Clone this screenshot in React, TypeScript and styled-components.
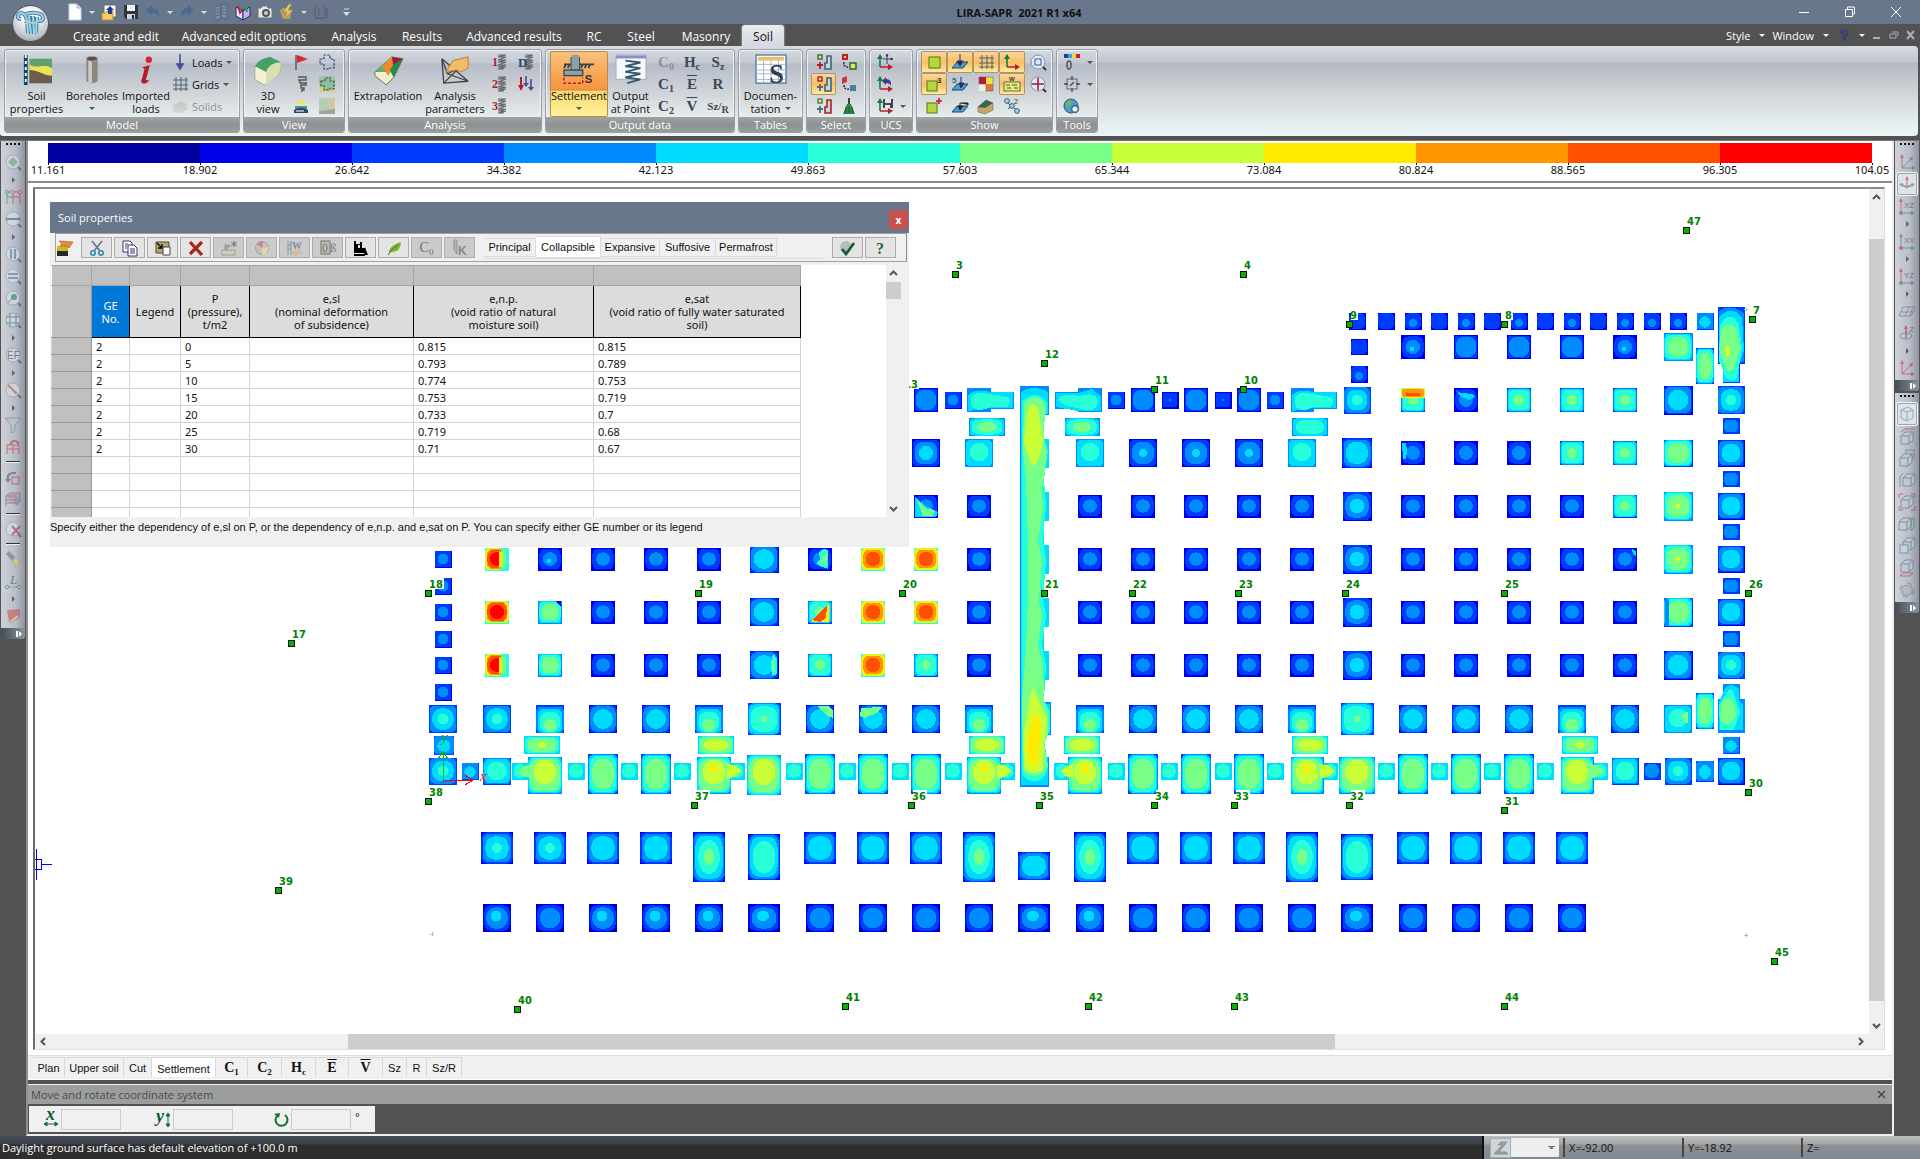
import React, { ReactNode } from "react";
import styled, { createGlobalStyle, css } from "styled-components";

const UI = `"Open Sans", "Noto Sans", sans-serif`;
const SANS = `"Liberation Sans", Arial, sans-serif`;
const DATA = `"Noto Sans", "Open Sans", sans-serif`;
const SERIF = `"Liberation Serif", "Times New Roman", serif`;

const GlobalStyle = createGlobalStyle`
  * { box-sizing: border-box; }
  body { margin: 0; background: #525252; font-family: ${UI}; font-size: 11px; color: #111; }
  button, input, select { font: inherit; color: inherit; }
  button { border: 0; background: none; padding: 0; cursor: pointer; }
  svg { display: block; flex: none; }
`;

/* ---------- icons ---------- */

const NAVY = "#2b5068";
const RED = "#c01828";
const GREEN = "#0f8040";

const Axes = () => (
  <>
    <path d="M3 0L0 5h6z" fill={GREEN} />
    <path d="M3 4v9" stroke={GREEN} strokeWidth="1.6" />
    <path d="M3 13h9" stroke={RED} strokeWidth="1.6" />
    <path d="M16 13l-5-3v6z" fill={RED} />
  </>
);
const Lens = ({ children }: { children?: ReactNode }) => (
  <>
    <path d="M12 12l4 4" stroke="#333" strokeWidth="2" />
    <circle cx="8" cy="8" r="7" fill="#dfe8f4" stroke="#7f93ad" />
    {children}
  </>
);
const Cube = ({ x = 2, y = 2 }: { x?: number; y?: number }) => (
  <g transform={`translate(${x} ${y})`}>
    <path d="M0 4l4-4h8v8l-4 4H0z" fill="#c3cfdd" stroke="#4b5a70" />
    <path d="M0 4h8v8M8 4l4-4" fill="none" stroke="#4b5a70" />
  </g>
);
const Spring = ({ x = 6 }: { x?: number }) => (
  <path d={`M${x} 1h8l-8 2h8l-8 3h8l-8 2h8l-8 3h8l-8 2h8l-8 2h6`} fill="none" stroke="#666" strokeWidth="1.2" />
);
const Plan = ({ letter }: { letter: string }) => (
  <>
    <path d="M2 15V3" stroke={letter === "XY" ? "#4b4bb0" : RED} />
    <path d="M2 15h12" stroke={letter === "YZ" ? "#4b4bb0" : GREEN} />
    <path d="M2 0L0 4h4z" fill={letter === "XY" ? "#4b4bb0" : RED} />
    <path d="M16 15l-4-2v4z" fill={letter === "YZ" ? "#4b4bb0" : GREEN} />
    <circle cx="2" cy="15" r="2" fill={letter === "XZ" ? "#4b4bb0" : letter === "XY" ? RED : GREEN} />
    <text x="5" y="10" fontSize="8" fill="#333" fontFamily="Liberation Sans">{letter}</text>
  </>
);
const Blocks = ({ a, b, plus, big }: { a: string; b: string; plus: string; big: string }) => (
  <>
    <rect x="2" y="1" width="4" height="4" fill={a} stroke={b} strokeWidth="1.4" />
    <path d="M4 8v7M1 11h6" stroke={plus} strokeWidth="1.8" />
    <path d="M11 2h4v13H9V9h2z" fill="#c9d6df" stroke={big} strokeWidth="1.6" />
  </>
);

const icons: Record<string, ReactNode> = {
  newFile: <><path d="M2 0h8l4 4v12H2z" fill="#fff" stroke="#ccd2da" /><path d="M10 0v4h4" fill="#dde" stroke="#aab" /></>,
  open: <><rect x="3" y="1" width="12" height="12" fill="#fff" stroke="#667" /><path d="M1 9h4l1-2h6v9H1z" fill="#f4cd6b" stroke="#c08f28" /><path d="M9 2l4 4h-2v4H7V6H5z" fill="#233a8c" /></>,
  save: <><path d="M1 1h14v14H3l-2-2z" fill="#30343a" /><rect x="4" y="1" width="8" height="6" fill="#eef1f4" /><rect x="4" y="10" width="8" height="5" fill="#cfd5da" /><rect x="9" y="11" width="2" height="4" fill="#222" /></>,
  undo: <path d="M1 6l6-5v3q8 0 7 10q-2-5-7-5v3z" fill="#50698f" />,
  redo: <path d="M15 6L9 1v3q-8 0-7 10q2-5 7-5v3z" fill="#50698f" />,
  pages: <><path d="M2 3l6-2v13l-6 2zM8 1h6v13H8z" fill="#8ba2ba" stroke="#47617d" /><path d="M3 6l5-2h5M3 9l5-2h5M3 12l5-2h5" stroke="#47617d" fill="none" /></>,
  book: <><path d="M1 3l7 4v9l-7-4z" fill="#e6e2f6" stroke="#2e2473" /><path d="M15 3L8 7v9l7-4z" fill="#c0b4ec" stroke="#2e2473" /><path d="M3 2l2 7 3-4" fill="none" stroke={RED} strokeWidth="1.5" /><path d="M11 2l1 6" stroke="#18a848" strokeWidth="2" /></>,
  camera: <><path d="M1 4h3l1-2h5l1 2h4v10H1z" fill="#e6e8ea" stroke="#6b7076" /><circle cx="9" cy="9" r="4" fill="#4f555c" /><circle cx="9" cy="9" r="2" fill="#c9ced3" /></>,
  bolt: <><path d="M1 7q3-6 12-1l-2 9H4z" fill="#b69d63" /><path d="M10 0L4 8h4l-3 8 9-10H9l4-6z" fill="#e4c862" stroke="#8e7d45" strokeWidth=".6" /></>,
  beamIcon: <path d="M2 14V2M6 11V4M2 14h11l3-3M12 12V2M14 11V4" stroke="#5b5577" strokeWidth="1.8" fill="none" />,
  help: <text x="4" y="13" fontSize="14" fontWeight="700" fill="#3e5aa8" stroke="#1c2c55" strokeWidth=".6" fontFamily="Liberation Sans">?</text>,

  soil: <><path d="M2 0v16" stroke="#0f4561" strokeWidth="2" /><path d="M2 0v16" stroke="#fff" strokeWidth="1" strokeDasharray="1.6 1.6" /><rect x="4" y="2" width="12" height="13" fill="#5fa070" /><path d="M4 5c4 3 8-1 12 2v4H4z" fill="#ece254" /><path d="M4 8c5 0 7 3 12 3v4H4z" fill="#6d5b50" /></>,
  borehole: <><path d="M5 2v12q3 2 6 0V2z" fill="#8d8683" /><path d="M6 2v13h2V2z" fill="#cfc9c6" /><ellipse cx="8" cy="2" rx="3" ry="1.3" fill="#57504e" stroke="#aaa" strokeWidth=".5" /></>,
  import: <><circle cx="9.500" cy="2.500" r="1.700" fill="#e0202c" /><path d="M6 6.500L10 5.500 8 13q0 1 2 0-2 3-4 2-1-.5 0-3l1.200-4.500z" fill="#b51c28" /></>,
  loads: <path d="M8 0v11M5 10h6l-3 5z" stroke="#3f4e9b" fill="#3f4e9b" strokeWidth="1.6" />,
  grid: <path d="M4 1v14M9 1v14M14 1v14M1 4h15M1 9h15M1 13h15" stroke="#4a6377" strokeWidth="1" />,
  solids: <><path d="M1 8l7-5 7 3v6l-8 3-6-1z" fill="#b5beb7" /><path d="M1 8l7-5 7 3-7 4z" fill="#9cb3a2" /><path d="M8 10l7-4v6l-7 3z" fill="#c9b2a6" /></>,
  view3d: <><path d="M1 6l8-5 6 3-1 6-8 6-5-3z" fill="#f4f1d4" stroke="#9a9c86" strokeWidth=".4" /><path d="M1 6q2-4 8-5l6 3q-6 0-8 5z" fill="#47a065" /><path d="M7 9q2-5 8-5l-1 6-7 6z" fill="#dbe0b0" /></>,
  flag: <><path d="M3 1v15" stroke="#555" strokeWidth="1.4" /><path d="M4 1l11 4-11 4z" fill="#dc2733" /></>,
  pile: <path d="M5 1h8v3H7v3h6v2H8v3h3v2H9v2M5 4h3M11 7h3" stroke="#555" fill="none" strokeWidth="1.4" />,
  layers: <><path d="M3 6l5-5 5 5z" fill="#f2e359" /><path d="M2 8h12v4H2z" fill="#4aa070" /><path d="M1 12q7-5 14 0v3H1z" fill="#32466e" /><path d="M3 13h8" stroke="#fff" /></>,
  contour: <path d="M1 5h4V1h6v4h4v9H9v1H5v-5H1z" fill="none" stroke={NAVY} strokeWidth="1.2" strokeDasharray="2.5 1.2" />,
  contourFill: <><rect width="16" height="16" fill="#9fc49f" /><path d="M0 9l6 3 10-4v8H0z" fill="#d9d27b" /><path d="M2 5h4V2h5v3h4v8H9v1H5v-4H2z" fill="#8fbf9b" stroke={NAVY} strokeWidth="1.2" strokeDasharray="2.5 1.2" /></>,
  faded: <><rect width="16" height="16" fill="#b4cdb4" /><path d="M8 0h8v16q-8-4-8-16z" fill="#cfcaa0" /><path d="M0 13l16-2v5H0z" fill="#a9a29a" /></>,
  extrap: <><path d="M1 9l9-8 6 1-5 10-4 4-6-5z" fill="#f2edca" stroke="#6b6b55" strokeWidth=".5" /><path d="M1 9l6-5 2 5z" fill="#63ad66" /><path d="M5 6l5-5 1 6-3 4z" fill="#f08a2c" /><path d="M10 1l6 1-5 5z" fill="#9c1e2c" /><path d="M16 2l-5 10-2-4 2-3z" fill="#248c4c" /></>,
  params: <><path d="M1 2l1 13 13-1L4 10zM1 2l14 12M4 10l6-3M2 15l9-9" stroke="#444" fill="none" strokeWidth=".7" /><path d="M3 9l4-6 8-2v6l-4 2-2-1z" fill="#f2bd68" stroke="#b67e30" strokeWidth=".5" /></>,
  k1: <><Spring /><text x="0" y="12" fontSize="12" fontWeight="700" fill="#b01c3c" fontFamily="Liberation Serif">1</text></>,
  k2: <><Spring /><text x="0" y="12" fontSize="12" fontWeight="700" fill="#b01c3c" fontFamily="Liberation Serif">2</text></>,
  k3: <><Spring /><text x="0" y="12" fontSize="12" fontWeight="700" fill="#b01c3c" fontFamily="Liberation Serif">3</text></>,
  kD: <><Spring x={7} /><text x="0" y="13" fontSize="13" fontWeight="700" fill="#25466b" fontFamily="Liberation Serif">D</text></>,
  arrows: <><path d="M3 1v10" stroke={RED} strokeWidth="2" /><path d="M10 11h6l-3 4zM5 7h6l-3 4z" fill="#484d8c" /><path d="M0 9h6l-3 6z" fill={RED} /><path d="M8 0v8M13 3v9" stroke="#484d8c" strokeWidth="1.6" /></>,
  settle: <><path d="M4 1v7M8 1v7M0 5h4M8 5h8M1 5l-1 2M3 5L2 7M10 5L9 7M12 5l-1 2M14 5l-1 2" stroke="#2d4654" fill="none" /><rect x="4" y="0" width="4" height="8" fill="#8ca0a8" /><rect x="0" y="8" width="10" height="3" fill="#8ca0a8" stroke="#2d4654" strokeWidth=".7" /><path d="M0 12v3h10v-3" fill="none" stroke={RED} strokeWidth=".8" strokeDasharray="1.6 1" /><text x="11" y="15" fontSize="6" fontWeight="700" fill="#333" fontFamily="Liberation Sans">S</text></>,
  outPoint: <><rect x="0" y="0" width="16" height="13" fill="#f6f8fb" stroke="#aab0d0" strokeWidth=".6" /><path d="M0 1h16" stroke="#8c90c4" strokeWidth="1.6" /><path d="M5 3l8 1-8 2 8 1-8 2 8 1-8 2 8 1-7 2" fill="none" stroke="#37596c" strokeWidth="1" /></>,
  doc: <><rect x="0" y="0" width="16" height="15" fill="#fff" stroke="#4679a0" strokeWidth=".7" /><rect x="1" y="1" width="14" height="2" fill="#edbd6c" /><path d="M0 5h16M0 8h16M0 10h16M0 13h16M4 3v12M8 3v12M12 3v12" stroke="#9fb6c6" strokeWidth=".5" /><text x="7" y="15" fontSize="14" fontWeight="700" fill="#333c58" fontFamily="Liberation Serif">S</text></>,

  sel1: <Blocks a="#d7e98a" b="#3b6b3b" plus={RED} big="#3f6378" />,
  sel2: <><rect x="1" y="0" width="6" height="6" fill="#b22" /><rect x="9" y="9" width="6" height="6" fill="#dbe56c" stroke="#286830" strokeWidth="1.5" /><path d="M3 8q-1 5 4 5" stroke="#333" strokeWidth="1.5" fill="none" strokeDasharray="2 1" /><rect x="3" y="2" width="2" height="2" fill="#f5df88" /></>,
  sel3: <Blocks a="#f0c9a0" b="#b01f1f" plus="#4f6b80" big="#3f6378" />,
  sel4: <><path d="M1 2l5-2v6L1 8z" fill="#cc3440" /><path d="M9 9h6v6H9z" fill="#447fa8" /><path d="M3 9q0 5 5 4" stroke="#333" strokeWidth="1.5" fill="none" strokeDasharray="2 1" /></>,
  sel5: <Blocks a="#d7e98a" b="#4b7b4b" plus="#4f6b80" big="#b01f1f" />,
  brush: <><path d="M8 0v7" stroke="#4d3a28" strokeWidth="2" /><path d="M6 6h4l4 10H2z" fill="#2c8446" /><path d="M5 9l-1 6M8 9v6M11 9l1 6" stroke="#175c2c" /></>,
  ucs1: <><Axes /><path d="M10 1v9M6 5h9M10 0l-1 2h2zM16 5l-2-1v2z" stroke="#3b446c" /></>,
  ucs2: <><Axes /><path d="M5 5l4-4v2q6 0 5 7q-1-3-5-3v2z" fill="#3c3c88" /></>,
  ucs3: <><Axes /><path d="M6 1h10v9H6z" fill="#40464c" /><path d="M8 1h6v4H8zM8 7h5v3H8z" fill="#e2e6ea" /></>,
  sq: <rect x="3" y="3" width="11" height="11" fill="#b7d53c" stroke="#4d7a1a" />,
  sq3: <><rect x="1" y="5" width="10" height="10" fill="#b7d53c" stroke="#4d7a1a" /><text x="11" y="7" fontSize="8" fontWeight="700" fill="#333" fontFamily="Liberation Sans">3</text></>,
  sqPlus: <><rect x="1" y="5" width="10" height="10" fill="#b7d53c" stroke="#4d7a1a" /><path d="M13 0v6M10 3h6" stroke={RED} strokeWidth="1.6" /></>,
  plate: <><path d="M0 14l5-6h11l-5 6z" fill="#4f9ccf" stroke="#1c4a6e" /><path d="M8 0v8M5 7h6l-3 5z" fill="#262e68" stroke="#262e68" /></>,
  plate5: <><path d="M0 14l5-6h11l-5 6z" fill="#4f9ccf" stroke="#1c4a6e" /><path d="M9 1v7M7 7h5l-3 5z" fill="#262e68" stroke="#262e68" /><text x="0" y="7" fontSize="8" fontWeight="700" fill="#24803c" fontFamily="Liberation Sans">5</text></>,
  plate0: <><path d="M0 14l5-6h11l-5 6z" fill="#4f9ccf" stroke="#1c4a6e" /><path d="M8 5h8v2M8 5v4M6 8h5l-3 4z" fill="#222" stroke="#222" /></>,
  axes: <Axes />,
  zoomW: <Lens><rect x="5" y="5" width="6" height="6" fill="none" stroke="#355f8d" /></Lens>,
  tiles: <><rect x="1" y="1" width="7" height="7" fill="#b81838" /><rect x="8" y="1" width="7" height="7" fill="#f5e23c" /><rect x="8" y="8" width="7" height="7" fill="#dc7c3c" /><rect x="1" y="8" width="7" height="7" fill="#f4ece0" /><path d="M1 1h14v14H8V8H1z" fill="none" stroke="#555" strokeWidth=".5" /></>,
  water: <><rect x="0" y="6" width="16" height="9" fill="#ece963" stroke="#55715c" /><path d="M2 9h4M8 9h5M3 12h4M10 12h4" stroke="#255f90" /><text x="5" y="5" fontSize="6" fontWeight="700" fill="#333" fontFamily="Liberation Sans">W</text></>,
  zoomP: <Lens><path d="M8 2v12M2 8h12" stroke="#a01c3c" strokeWidth="1.6" /></Lens>,
  house: <><path d="M0 9l8-7 7 3v7l-8 4-7-2z" fill="#caa46c" stroke="#57543f" strokeWidth=".5" /><path d="M0 9l8-7 7 3-8 5z" fill="#34684b" /></>,
  nodes: <><path d="M3 4l5 5M10 10l4 3M4 11l5-5" stroke="#555" /><circle cx="3" cy="3" r="2.4" fill="#9fd0e4" stroke="#35607e" /><circle cx="8" cy="8" r="2.4" fill="#9fd0e4" stroke="#35607e" /><circle cx="13" cy="13" r="2.4" fill="#9fd0e4" stroke="#35607e" /><text x="10" y="6" fontSize="7" fill="#333" fontFamily="Liberation Sans">2</text></>,
  scale: <><path d="M0 2h4" stroke="#223c9c" strokeWidth="4" /><path d="M4 2h4" stroke="#36a5d8" strokeWidth="4" /><path d="M8 2h4" stroke="#edd83c" strokeWidth="4" /><path d="M12 2h4" stroke="#cc2030" strokeWidth="4" /><ellipse cx="5" cy="11" rx="2" ry="4" fill="none" stroke="#555" strokeWidth="1.6" /></>,
  target: <><rect x="3" y="3" width="10" height="10" fill="none" stroke="#566" /><path d="M8 0v4M8 12v4M0 8h4M12 8h4M6 10l4-4" stroke="#334a60" strokeWidth="1.3" /></>,
  globe: <><circle cx="7" cy="8" r="7" fill="#4a9fc9" stroke="#25577a" /><path d="M2 5q4-4 6-2l-2 4-3 2z" fill="#7fb84f" /><circle cx="11" cy="11" r="3.4" fill="#e6edf2" stroke="#446f94" strokeWidth="1.6" /></>,

  hand: <><path d="M0 6h11v10H0z" fill="#c8b830" /><path d="M0 11h11v5H0z" fill="#26282a" /><path d="M2 1l14 1-4 6-3-2-6 0 2-2z" fill="#e98e3c" stroke="#a3521e" strokeWidth=".6" /></>,
  cut: <><path d="M3 1l8 10M13 1L5 11" stroke="#667380" strokeWidth="1.6" /><circle cx="4" cy="13" r="2.2" fill="none" stroke="#2d87b8" strokeWidth="1.6" /><circle cx="12" cy="13" r="2.2" fill="none" stroke="#2d87b8" strokeWidth="1.6" /></>,
  copy: <><path d="M1 1h7l2 2v9H1z" fill="#fff" stroke="#34346c" /><path d="M6 5h6l3 3v8H6z" fill="#fff" stroke="#34346c" /><path d="M8 9h5M8 11h5M8 13h5M3 4h3M3 6h2M3 8h2" stroke="#34346c" /></>,
  paste: <><path d="M1 2h13v11H1z" fill="#b0a668" stroke="#4e4a30" /><path d="M8 7h7v8H8z" fill="#fff" stroke="#444" /><path d="M2 3l5 5M7 4v4H3" stroke="#111" strokeWidth="1.4" fill="none" /></>,
  del: <path d="M2 2l12 13M14 2L2 14" stroke="#a8281c" strokeWidth="3.2" />,
  add: <><path d="M1 10h13v5H1z" fill="#d6cfae" stroke="#8b866e" /><path d="M5 10V6h4" stroke="#7d8c8c" strokeWidth="3" fill="none" /><path d="M13 1v6M10 2l6 4M16 2l-6 4" stroke="#444" /></>,
  pie: <><circle cx="8" cy="8" r="6.5" fill="#cbb8b8" stroke="#888" /><path d="M8 8l7-1-3 7-4 1z" fill="#e9dcaa" /><path d="M8 8L3 4l6-3z" fill="#c25a6a" /></>,
  wHand: <><path d="M1 1v14M4 1v14M1 5h3M1 9h3" stroke="#78909c" strokeWidth="1.4" /><text x="5" y="9" fontSize="10" fontWeight="700" fill="#5b7087" fontFamily="Liberation Serif">W</text><path d="M3 11l10-1 3 3-8 3z" fill="#d9ae8c" /></>,
  beta: <><rect x="1" y="1" width="9" height="13" fill="#bbb59f" stroke="#444" /><ellipse cx="5" cy="8" rx="2" ry="4" fill="none" stroke="#444" /><text x="10" y="12" fontSize="13" fill="#555" fontFamily="Liberation Serif">ß</text></>,
  dozer: <path d="M1 1h2v3h4V2h2v6h3v-1l1 3 2 5h-3l-1-2H1zM1 14h11v2H1zM5 5v3h2V5z" fill="#000" />,
  leaf: <><path d="M3 14q-1-8 12-12q0 10-10 10z" fill="#7fb52e" /><path d="M2 15q4-7 10-10" stroke="#4c7d18" fill="none" /></>,
  pileK: <><path d="M2 0v10l3 4V0z" fill="#aaa" stroke="#777" /><text x="6" y="15" fontSize="12" fontWeight="700" fill="#666" fontFamily="Liberation Sans">K</text></>,
  ok: <><circle cx="7" cy="7" r="6" fill="#b9bcbc" /><path d="M3 9l4 5 8-11" stroke="#155c2c" strokeWidth="2.6" fill="none" /></>,
  qm: <text x="4" y="14" fontSize="16" fontWeight="700" fill="#176a35" fontFamily="Liberation Serif">?</text>,

  lensDot: <Lens><path d="M8 3l5 5-5 5-5-5z" fill="#6ba57a" /></Lens>,
  frame: <><path d="M8 15V3h7v12M8 8h7" stroke={RED} fill="none" /><path d="M2 15V3h6M2 8h6" stroke="#1f7a4a" fill="none" /><circle cx="2" cy="3" r="1.6" fill="#a5d0b0" stroke={GREEN} /><circle cx="8" cy="3" r="1.6" fill="#fcc" stroke={RED} /><circle cx="15" cy="3" r="1.6" fill="#fcc" stroke={RED} /></>,
  lensH: <Lens><path d="M1 8h14" stroke="#2c5c50" strokeWidth="2" /><circle cx="2" cy="8" r="1.6" fill={GREEN} /><circle cx="14" cy="8" r="1.6" fill={GREEN} /></Lens>,
  lensV: <Lens><path d="M6 3v10M10 3v10" stroke="#285a78" strokeWidth="1.6" /></Lens>,
  lensE: <Lens><path d="M3 6h10M3 10h10" stroke="#285a78" strokeWidth="1.6" /></Lens>,
  lensC: <Lens><circle cx="9" cy="7" r="3" fill={GREEN} /><path d="M2 13l5-4" stroke="#555" /></Lens>,
  lensG: <Lens><path d="M5 1v14M11 1v14M1 5h14M1 11h14" stroke="#285a78" /></Lens>,
  lensEF: <Lens><text x="2" y="12" fontSize="10" fill="#333" fontFamily="Liberation Sans">EF</text></Lens>,
  lensP: <Lens><path d="M3 3l9 9" stroke="#b8602c" strokeWidth="2.4" /></Lens>,
  funnel: <path d="M0 1h16l-6 7v6l-4 2V8z" fill="#b7c5cc" stroke="#65767f" />,
  frameUndo: <><path d="M2 15V6h12v9M2 10h12M8 6v9" stroke={RED} fill="none" /><path d="M5 6q4-8 9-1" stroke={RED} strokeWidth="2" fill="none" /></>,
  rot: <><rect x="7" y="8" width="7" height="7" fill="none" stroke={RED} /><path d="M3 12q-2-9 8-8" stroke="#34407c" strokeWidth="2" fill="none" /><path d="M0 10h6l-3 4z" fill="#34407c" /></>,
  mesh: <path d="M1 5l4-3h10v9l-4 3M1 5h10v9M1 5v10M1 9h10l4-3M1 12h10l4-3" stroke="#445a78" fill="#d58080" />,
  lensX: <Lens><path d="M7 5l8 9M15 5l-8 9" stroke={RED} strokeWidth="2" /></Lens>,
  torch: <><path d="M1 3l3-3 6 6-3 4z" fill="#667" /><path d="M7 10l5-4 3 6-4 4z" fill="#e9cf3a" stroke="#a88" /></>,
  lIcon: <><text x="5" y="11" fontSize="13" fontStyle="italic" fill="#333" fontFamily="Liberation Serif">L</text><path d="M1 14h14" stroke={GREEN} strokeDasharray="2 1" /><circle cx="2" cy="14" r="1.6" fill="#cec" stroke={GREEN} /><circle cx="14" cy="14" r="1.6" fill="#cec" stroke={GREEN} /></>,
  notes: <><path d="M2 2l13-1v9L4 14z" fill="#d04040" /><path d="M4 14l8-7 2 2-8 6z" fill="#f0d060" stroke="#a77" /></>,

  iso: <><path d="M3 14l9-9" stroke="#4b4bb0" /><path d="M3 14V2" stroke={RED} /><path d="M3 14h11" stroke={GREEN} /><path d="M3 0L1 4h4z" fill={RED} /><path d="M14 3l-4 1 3 3z" fill="#4b4bb0" /><path d="M16 14l-3-2v4z" fill={GREEN} /></>,
  iso2: <><path d="M8 11V1M8 11l6-3M8 11L2 8" stroke={RED} strokeWidth="1.2" /><path d="M8 0L6 4h4z" fill={RED} /><path d="M8 12L2 9" stroke="#4b4bb0" /><path d="M0 8l4-1-1 4z" fill="#4b4bb0" /><path d="M16 8l-4-1 1 4z" fill={GREEN} /><path d="M8 12l6-3" stroke={GREEN} /></>,
  xz: <Plan letter="XZ" />, xy: <Plan letter="XY" />, yz: <Plan letter="YZ" />,
  floor: <path d="M0 13l4-9h12l-4 9zM2 9h12M6 13l4-9M10 13l4-9" fill="#c5ccd6" stroke="#56637a" />,
  rotZ: <><path d="M7 13V1" stroke={RED} strokeWidth="1.6" /><path d="M7 0L5 4h4z" fill={RED} /><ellipse cx="7" cy="11" rx="6" ry="3" fill="none" stroke="#3b538c" /><text x="10" y="7" fontSize="8" fill="#333" fontFamily="Liberation Sans">Z</text></>,
  xyz: <><path d="M3 14V2M3 14h12M3 14l9-9" stroke={RED} /><path d="M3 0L1 4h4zM16 14l-4-2v4zM14 3l-4 1 3 3z" fill={RED} /></>,
  cube: <><path d="M2 4l7-3 5 3v8l-6 3-6-3z" fill="#d8dee6" stroke="#5f6c7e" /><path d="M2 4l6 2 6-2M8 6v9" stroke="#5f6c7e" fill="none" /></>,
  cubeT: <><Cube y={4} /><path d="M2 4l4-3h9" stroke={RED} fill="none" /></>,
  cubeB: <><rect x="7" y="0" width="8" height="8" fill="none" stroke="#1f6f9c" /><Cube x={1} y={4} /></>,
  cubeL: <><Cube x={4} /><path d="M1 15V5l3-4" stroke={GREEN} fill="none" /></>,
  cubeS: <><Cube /><path d="M0 4V0h4M12 0h4v4M0 12v4h4M12 16h4v-4" stroke={RED} fill="none" /></>,
  cubeR: <><Cube x={0} /><path d="M12 15V5l3-4v10z" stroke={GREEN} fill="none" /></>,
  cubeF: <><Cube x={4} y={0} /><rect x="1" y="7" width="8" height="8" fill="#d3dfea" stroke="#1f6f9c" /></>,
  cubeD: <><Cube y={0} /><path d="M1 16l3-3h10l-3 3z" stroke={RED} fill="none" /></>,
  cubeI: <><path d="M8 3l5 2v6l-5 3-5-3V5z" fill="#a7b1be" stroke="#5f6c7e" /><circle cx="8" cy="8" r="7" fill="none" stroke={GREEN} strokeDasharray="5 6" /></>,

  moveX: <><text x="3" y="9" fontSize="18" fontWeight="700" fontStyle="italic" fill="#0f5a2c" fontFamily="Liberation Serif">x</text><path d="M3 13h10M1 13l3-2v4zM15 13l-3-2v4z" stroke="#0f7038" fill="#0f7038" /></>,
  moveY: <><text x="1" y="11" fontSize="18" fontWeight="700" fontStyle="italic" fill="#0f5a2c" fontFamily="Liberation Serif">y</text><path d="M13 5v8M13 2l-2 3h4zM13 16l-2-3h4z" stroke="#0f7038" fill="#0f7038" /></>,
  turn: <><path d="M5 4a6 6 0 1 0 7 0" fill="none" stroke="#0f7038" strokeWidth="2" /><path d="M1 3l6-1-1 5z" fill="#0f7038" /></>,
  zStat: <path d="M5 5l3-3h6l-8 10h7l2 2H1L10 4z" fill="#9c9fa2" stroke="#8c9094" />,
};

const IconSvg = styled.svg`overflow: visible;`;
const Icon = ({ name, size = 16 }: { name: string; size?: number }) => (
  <IconSvg width={size} height={size} viewBox="0 0 16 16" aria-hidden="true">{icons[name]}</IconSvg>
);

const Caret = styled.i<{ $c?: string }>`
  display: block; flex: none; width: 0; height: 0;
  border: 3px solid transparent; border-top-color: ${(p) => p.$c || "#555"}; border-bottom: 0;
`;
const CaretRight = styled.i`
  display: block; width: 0; height: 0; border: 3px solid transparent; border-left-color: #5c6166; border-right: 0;
`;

/* ---------- title bar and tabs ---------- */

const Page = styled.div`display: flex; flex-direction: column; height: 100vh; min-height: 700px; background: #525252; overflow: hidden;`;
const TitleBar = styled.header`
  position: relative; display: flex; align-items: center; flex: none; height: 24px;
  padding-left: 67px; background: #68778b;
`;
const Quick = styled.div`display: flex; align-items: center; gap: 6px; flex: 1 0 68px;`;
const QuickButton = styled.button<{ $dim?: boolean }>`opacity: ${(p) => (p.$dim ? 0.6 : 1)};`;
const QuickMore = styled.button`margin-left: 8px;`;
const AppTitle = styled.h1`margin: 0; font: 700 11px ${UI}; color: #111;`;
const WinButtons = styled.div`flex: 1 0 0; display: flex; justify-content: flex-end; gap: 32px; padding-right: 17px; color: #fff;`;
const Orb = styled.button`
  position: absolute; left: 12px; top: 5px; width: 37px; height: 37px; border-radius: 50%;
  background: radial-gradient(circle at 50% 30%, #fff 20%, #c3c8ce 65%, #888e96); border: 1px solid #555;
  display: grid; place-items: center; z-index: 2;
`;
const TabBar = styled.nav`display: flex; flex: none; align-items: flex-end; height: 22px; padding-left: 60px; background: #525252;`;
const TabButton = styled.button<{ $w: number; $on?: boolean }>`
  width: ${(p) => p.$w}px; height: 21px; padding-top: 2px; flex: none; color: #fff; font-size: 12px; white-space: nowrap;
  ${(p) => p.$on && css`background: linear-gradient(#e9ecf0, #d5d8e0); color: #111; border-radius: 3px 3px 0 0; box-shadow: 0 0 2px #bfeff5;`}
`;
const TabTools = styled.div`margin-left: auto; display: flex; align-items: center; gap: 7px; height: 22px; padding-right: 4px; color: #fff;`;
const TextButton = styled.button`display: flex; align-items: center; gap: 9px; color: #fff;`;

/* ---------- ribbon ---------- */

const Ribbon = styled.section`
  display: flex; flex: none; gap: 3px; height: 90px; padding: 3px 4px 2px; margin-right: 2px;
  border-radius: 0 4px 4px 3px; border-bottom: 1px solid #f4f6f6;
  background: linear-gradient(#d8dbe2, #c2c6d0 16px, #b3b9c5 17px, #d3d7da 50px, #e7f2f2 82px);
`;
const Group = styled.div<{ $w: number }>`
  width: ${(p) => p.$w}px; flex: none; display: flex; flex-direction: column;
  border: 1px solid #9a9fa6; border-radius: 3px; overflow: hidden; box-shadow: inset 0 0 0 1px #eef1f3;
  background: linear-gradient(#d5d9e0, #c3c8d2 13px, #b6bcc8 14px, #d5d9dc 48px, #e8f1f1 70px);
`;
const GroupBody = styled.div`display: flex; flex: 1; padding: 1px 4px 0; min-height: 0;`;
const GroupName = styled.div`height: 15px; flex: none; font-size: 11px; line-height: 16px; text-align: center; color: #fff; background: linear-gradient(#a0a4a4, #8d9191 50%, #999d9d);`;
const BigBtn = styled.button<{ $w: number; $on?: boolean }>`
  width: ${(p) => p.$w}px; flex: none; display: flex; flex-direction: column; align-items: center; padding-top: 4px;
  ${(p) => p.$on && css`border: 1px solid #b58c4c; border-radius: 2px; padding-top: 3px; background: linear-gradient(#fbc07a, #f79640 37px, #b98b4c 38px, #fbd772 39px, #fff39c);`}
`;
const BigText = styled.span`display: flex; flex-direction: column; align-items: center; margin-top: 4px; line-height: 13px; font-size: 11px; white-space: nowrap;`;
const CaretRow = styled.span`display: flex; align-items: center; justify-content: center; gap: 4px; height: 13px;`;
const SmallGrid = styled.div<{ $cols: number; $w?: number }>`
  display: grid; grid-template-columns: repeat(${(p) => p.$cols}, ${(p) => p.$w || 26}px); grid-auto-rows: 22px; align-content: start;
`;
const SmallBtn = styled.button<{ $on?: boolean; $dim?: boolean }>`
  display: flex; align-items: center; justify-content: center; gap: 4px; white-space: nowrap;
  opacity: ${(p) => (p.$dim ? 0.4 : 1)};
  ${(p) => p.$on && css`border: 1px solid #b29462; border-radius: 2px; background: linear-gradient(#fbd6a0, #f9bf62 50%, #fdeaa0);`}
`;
const RowBtn = styled(SmallBtn)`justify-content: flex-start;`;
const MathText = styled.span<{ $over?: boolean }>`
  font: 700 15px/18px ${SERIF}; color: #3d4758;
  sub { font-size: 10px; line-height: 10px; vertical-align: -3px; }
  ${(p) => p.$over && css`text-decoration: overline;`}
`;
const Ratio = styled(MathText)`font-size: 11px;`;

const Big = ({ icon, a, b, w, on, caret, size = 30 }: { icon: string; a: string; b?: string; w: number; on?: boolean; caret?: boolean; size?: number }) => (
  <BigBtn $w={w} $on={on}>
    <Icon name={icon} size={size} />
    <BigText><span>{a}</span><CaretRow>{b}{caret && <Caret />}</CaretRow></BigText>
  </BigBtn>
);
const Cells = ({ names, cols, on = [], w }: { names: string[]; cols: number; on?: string[]; w?: number }) => (
  <SmallGrid $cols={cols} $w={w}>
    {names.map((n, i) => n ? <SmallBtn key={i} $on={on.includes(n)} aria-label={n}><Icon name={n} /></SmallBtn> : <span key={i} />)}
  </SmallGrid>
);
const CaretCol = styled.div`display: grid; grid-auto-rows: 22px; align-items: center; padding-left: 4px;`;

/* ---------- rails ---------- */

const Workspace = styled.div`display: flex; flex: 1; min-height: 0; border-top: 1px solid #777; margin-top: 4px;`;
const RailBox = styled.aside<{ $w: number }>`width: ${(p) => p.$w}px; flex: none; display: flex; flex-direction: column; padding: 0 1px;`;
const Rail = styled.div`
  display: flex; flex-direction: column; align-items: center; padding: 1px 0;
  background: linear-gradient(90deg, #cfd2d8, #b9bdc8 60%, #9095a1);
`;
const Dots = styled.div`width: 14px; height: 8px; border-top: 2px dotted #111; margin-top: 1px;`;
const RailBtn = styled.button<{ $on?: boolean }>`
  width: 20px; height: 22px; display: grid; place-items: center;
  svg { opacity: 0.5; }
  ${(p) => p.$on && css`background: #dde5e8; border: 1px solid #9aa4ac; border-radius: 2px; box-shadow: 0 0 0 1px #f0f4f5;`}
`;
const RailArrow = styled.div`height: 13px; display: grid; place-items: center;`;
const RailSep = styled.div`height: 8px; display: grid; place-items: center; &::before { content: ""; width: 14px; border-top: 1px solid #333; border-bottom: 1px solid #eee; }`;
const RailEnd = styled.div`
  height: 11px; display: flex; align-items: center; justify-content: flex-end; gap: 1px; padding-right: 3px; margin-bottom: 2px;
  background: linear-gradient(90deg, #444c58, #8c93a0); border-radius: 0 0 3px 0;
  &::before { content: ""; width: 2px; height: 6px; background: #fff; }
  i { border-left-color: #fff; }
`;
const RailTools = ({ items, on }: { items: string[]; on?: string }) => (
  <>
    <Rail>
      <Dots />
      {items.map((n, i) =>
        n === ">" ? <RailArrow key={i}><CaretRight /></RailArrow>
          : n === "-" ? <RailSep key={i} />
          : <RailBtn key={i} $on={n === on} aria-label={n}><Icon name={n} /></RailBtn>)}
    </Rail>
    <RailEnd><CaretRight /></RailEnd>
  </>
);

/* ---------- centre ---------- */

const Centre = styled.main`flex: 1; min-width: 0; display: flex; flex-direction: column; border-right: 2px solid #eee; border-left: 2px solid #8f8f8f; border-bottom: 2px solid #eee;`;
const Doc = styled.section`flex: 1; min-height: 0; display: flex; flex-direction: column; background: #fff; border-bottom: 1px solid #fff; margin-bottom: 4px;`;
const Legend = styled.div`flex: none; height: 42px; padding: 2px 20px 0 20px; overflow: hidden; border-bottom: 2px solid #8b8b8b;`;
const Bar = styled.div`display: grid; grid-template-columns: repeat(12, 1fr); height: 20px;`;
const Swatch = styled.span<{ $c: string }>`background: ${(p) => p.$c};`;
const Ticks = styled.div`display: flex; justify-content: space-between;`;
const Tick = styled.span`
  width: 0; display: flex; flex-direction: column; align-items: center; font: 11px/10px ${DATA}; color: #111;
  &::before { content: ""; height: 2px; flex: none; border-left: 1px solid #111; }
`;
const View = styled.div`flex: 1; min-height: 0; display: flex; flex-direction: column; margin: 4px 7px 5px 5px; border-left: 2px solid #6c6c6c; border-top: 2px solid #8b8b8b; border-right: 1px solid #ddd; border-bottom: 1px solid #ddd;`;
const ViewTop = styled.div`flex: 1; min-height: 0; display: flex;`;
const Canvas = styled.div`flex: 1; min-width: 0; position: relative; overflow: hidden; background: #fff;`;
const VScroll = styled.div`width: 15px; flex: none; display: flex; flex-direction: column; background: #f0f0f0;`;
const HScroll = styled.div`height: 15px; flex: none; display: flex; background: #f0f0f0; padding-right: 15px;`;
const ScrollArrow = styled.button<{ $len: number; $v?: boolean }>`
  display: grid; place-items: center; flex: none; background: #f0f0f0;
  ${(p) => (p.$v ? `height: ${p.$len}px;` : `width: ${p.$len}px;`)}
`;
const Thumb = styled.div<{ $grow: number }>`flex: ${(p) => p.$grow} 1 0; background: #cdcdcd;`;
const Space = styled.div<{ $grow: number }>`flex: ${(p) => p.$grow} 1 0;`;
const Chevron = ({ turn }: { turn: number }) => (
  <svg width="9" height="9" viewBox="0 0 9 9" aria-hidden="true"><path d="M1 6l3.5-3.5L8 6" transform={`rotate(${turn} 4.5 4.5)`} fill="none" stroke="#555" strokeWidth="2" /></svg>
);
const Sheets = styled.nav`flex: none; display: flex; height: 24px; background: #f0f0f0; border-top: 1px solid #ddd; padding: 1px 2px 2px 5px; font: 12px ${SANS};`;
const Sheet = styled.button<{ $w: number; $on?: boolean }>`
  width: ${(p) => p.$w}px; flex: none; border-right: 1px solid #d8d8d8; border-top: 1px solid #d8d8d8; font-size: 11px; white-space: nowrap;
  ${(p) => p.$on && css`background: #fff; padding-top: 3px;`}
`;
const SheetMath = styled(MathText)<{ $grey?: boolean }>`color: ${(p) => (p.$grey ? "#707070" : "#111")}; font-size: 14px; font-weight: ${(p) => (p.$grey ? 400 : 700)}; sub { font-size: 9px; }`;
const DockTitle = styled.div`flex: none; height: 20px; display: flex; align-items: center; justify-content: space-between; padding: 0 6px 0 3px; border-top: 1px solid #eee; background: #9b9e9c; color: #4a4a4a; font-size: 11px;`;
const DockBody = styled.div`flex: none; height: 30px; padding: 2px 0 0 1px;`;
const DockPanel = styled.form`display: grid; grid-template-columns: 112px 118px 1fr; align-items: center; width: 346px; height: 26px; padding-left: 14px; background: #f0f0f0;`;
const Field = styled.label`display: flex; align-items: center; gap: 2px;`;
const FieldInput = styled.input`width: 60px; height: 21px; border: 1px solid #ccc; background: #f0f0f0;`;
const Degree = styled.span`align-self: flex-start; padding-left: 2px;`;

/* ---------- dialog ---------- */

const Dialog = styled.section`position: absolute; left: 15px; top: 13px; width: 859px; height: 345px; display: flex; flex-direction: column; background: #f0f0f0;`;
const DialogTitle = styled.div`flex: none; display: flex; align-items: center; justify-content: space-between; height: 31px; padding: 0 1px 0 8px; background: #68778b; color: #fff;`;
const DialogClose = styled.button`width: 19px; height: 19px; margin-top: 4px; background: #c75050; color: #fff; font: 700 10px/10px ${UI};`;
const DialogTools = styled.div`flex: none; display: flex; align-items: center; height: 29px; margin: 0 2px 0 5px; padding-left: 1px; border: 1px solid #a0a0a0; border-right-color: #888; background: #f0f0f0; font: 11px ${SANS};`;
const ToolIcon = styled.button<{ $off?: boolean }>`
  width: 31px; height: 21px; margin-right: 2px; flex: none; display: grid; place-items: center; border: 1px solid #acacac;
  background: ${(p) => (p.$off ? "#cbcbcb" : "#e4e4e4")};
  svg { opacity: ${(p) => (p.$off ? 0.65 : 1)}; }
`;
const First = styled.button`width: 24px; display: flex;`;
const DTabs = styled.div`display: flex; align-items: center; width: 339px; height: 22px; margin-left: 7px; border-bottom: 1px solid #ddd;`;
const DTab = styled.button<{ $w: number; $on?: boolean }>`
  width: ${(p) => p.$w}px; height: ${(p) => (p.$on ? 22 : 19)}px; flex: none; border: 1px solid #dadada; border-left: 0; white-space: nowrap;
  ${(p) => p.$on && css`background: #fff;`}
`;
const GridRow = styled.div`flex: 1; min-height: 0; display: flex; margin: 3px 8px 0 1px;`;
const TableClip = styled.div`flex: 1; overflow: hidden; background: #fff;`;
const Table = styled.table`
  width: 749px; table-layout: fixed; border-collapse: collapse; font: 11px/13px ${DATA};
  th, td { padding: 0; }
  td { height: 17px; border: 1px solid #d4d4d4; padding: 0 4px; }
  tbody th { background: #c0c0c0; border: 1px solid #999; border-left-color: #ddd; }
`;
const Strip = styled.th`height: 20px; background: #c0c0c0; border: 1px solid #a4a4a4; border-left-color: #fff;`;
const Head = styled.th<{ $on?: boolean; $blank?: boolean }>`
  height: 52px; font-weight: 400; background: ${(p) => (p.$on ? "#0078d7" : p.$blank ? "#c0c0c0" : "#dcdcdc")};
  color: ${(p) => (p.$on ? "#fff" : "#111")}; white-space: pre-line;
  border-right: 1px solid ${(p) => (p.$blank ? "#999" : "#000")}; border-bottom: 1px solid ${(p) => (p.$blank ? "#999" : "#000")};
`;
const Note = styled.p`flex: none; margin: 0; height: 30px; padding-top: 3px; font: 11px/14px ${SANS}; white-space: nowrap;`;

const tableRows = [
  ["0", "0.815", "0.815"], ["5", "0.793", "0.789"], ["10", "0.774", "0.753"], ["15", "0.753", "0.719"],
  ["20", "0.733", "0.7"], ["25", "0.719", "0.68"], ["30", "0.71", "0.67"],
];
const columns = [40, 38, 51, 69, 164, 180, 207];

const SoilDialog = () => (
  <Dialog role="dialog" aria-label="Soil properties">
    <DialogTitle><span>Soil properties</span><DialogClose aria-label="Close">x</DialogClose></DialogTitle>
    <DialogTools>
      <First aria-label="hand"><Icon name="hand" /></First>
      {["cut", "copy", "paste", "del", "-add", "-pie", "-wHand", "-beta", "dozer", "leaf"].map((n) => (
        <ToolIcon key={n} $off={n[0] === "-"} aria-label={n}><Icon name={n.replace("-", "")} /></ToolIcon>
      ))}
      <ToolIcon $off><SheetMath $grey>C<sub>0</sub></SheetMath></ToolIcon>
      <ToolIcon $off aria-label="pile"><Icon name="pileK" /></ToolIcon>
      <DTabs>
        <DTab $w={52}>Principal</DTab><DTab $w={65} $on>Collapsible</DTab><DTab $w={59}>Expansive</DTab>
        <DTab $w={56}>Suffosive</DTab><DTab $w={61}>Permafrost</DTab>
      </DTabs>
      <Space $grow={1} />
      <ToolIcon aria-label="Apply"><Icon name="ok" /></ToolIcon>
      <ToolIcon aria-label="Help"><Icon name="qm" /></ToolIcon>
      <Space $grow={1} />
    </DialogTools>
    <GridRow>
      <TableClip>
        <Table>
          <colgroup>{columns.map((w, i) => <col key={i} style={{ width: w }} />)}</colgroup>
          <thead>
            <tr>{columns.map((_, i) => <Strip key={i} />)}</tr>
            <tr>
              <Head $blank />
              <Head $on>{"GE\nNo."}</Head><Head>Legend</Head><Head>{"P\n(pressure),\nt/m2"}</Head>
              <Head>{"e,sl\n(nominal deformation\nof subsidence)"}</Head>
              <Head>{"e,n.p.\n(void ratio of natural\nmoisture soil)"}</Head>
              <Head>{"e,sat\n(void ratio of fully water saturated\nsoil)"}</Head>
            </tr>
          </thead>
          <tbody>
            {tableRows.map(([p, n, s]) => <tr key={p}><th /><td>2</td><td /><td>{p}</td><td /><td>{n}</td><td>{s}</td></tr>)}
            {[0, 1, 2, 3].map((i) => <tr key={i}><th /><td /><td /><td /><td /><td /><td /></tr>)}
          </tbody>
        </Table>
      </TableClip>
      <VScroll>
        <ScrollArrow $len={17} $v aria-label="Up"><Chevron turn={0} /></ScrollArrow>
        <Thumb $grow={17} /><Space $grow={200} />
        <ScrollArrow $len={17} $v aria-label="Down"><Chevron turn={180} /></ScrollArrow>
      </VScroll>
    </GridRow>
    <Note>Specify either the dependency of e,sl on P, or the dependency of e,n.p. and e,sat on P. You can specify either GE number or its legend</Note>
  </Dialog>
);

/* ---------- settlement mosaic ---------- */

const palette = ["#0000a0", "#0000e8", "#003cff", "#008cff", "#00dcff", "#28ffd7", "#78ff87", "#c8ff37", "#ffeb00", "#ff9600", "#ff5000", "#ff0000"];
const bounds = ["11.161", "18.902", "26.642", "34.382", "42.123", "49.863", "57.603", "65.344", "73.084", "80.824", "88.565", "96.305", "104.05"];

/* contour profiles: [level, scale of the footing, centre shift x, centre shift y] */
type Ring = [number, number, number?, number?];
const P: Record<string, Ring[]> = {
  solid: [[1, 1], [2, 0.9]],
  low: [[1, 1], [2, 0.88], [3, 0.58]],
  lowDot: [[1, 1], [2, 0.88], [3, 0.6], [4, 0.2, -1, 2]],
  tiny: [[1, 1], [2, 0.96], [3, 0.62]],
  tinyDark: [[1, 1], [2, 0.88], [3, 0.16]],
  tinyTop: [[1, 1], [2, 0.9], [3, 0.45, 0, 2]],
  tinyCyan: [[2, 1], [3, 0.96], [4, 0.66, 0, 1]],
  tinyBlue: [[2, 1], [3, 0.8]],
  mid: [[1, 1], [2, 0.94], [3, 0.82]],
  base: [[0, 1], [1, 0.97], [2, 0.9], [3, 0.72]],
  baseCyan: [[0, 1], [1, 0.97], [2, 0.9], [3, 0.76], [4, 0.38, -1, -2]],
  blue: [[1, 1], [2, 0.95], [3, 0.8], [4, 0.5]],
  blueDot: [[1, 1], [2, 0.95], [3, 0.78], [4, 0.3]],
  cyan: [[1, 1], [2, 0.97], [3, 0.9], [4, 0.7]],
  cyanDot: [[2, 1], [3, 0.94], [4, 0.76], [5, 0.38]],
  pad: [[1, 1], [2, 0.97], [3, 0.9], [4, 0.74]],
  padTeal: [[1, 1], [2, 0.97], [3, 0.9], [4, 0.74], [5, 0.3]],
  tall: [[1, 1], [2, 0.98], [3, 0.94], [4, 0.86], [5, 0.68], [6, 0.32]],
  tallB: [[1, 1], [2, 0.98], [3, 0.94], [4, 0.86], [5, 0.7]],
  tealPad: [[2, 1], [3, 0.97], [4, 0.91], [5, 0.7]],
  teal: [[3, 1], [4, 0.94], [5, 0.66, 0, -1]],
  tealLow: [[2, 1], [3, 0.97, 0, 1], [4, 0.88, 0, 2], [5, 0.74, 0, 3], [6, 0.45, 0, 6]],
  tealBig: [[2, 1], [3, 0.97], [4, 0.92], [5, 0.8], [6, 0.18]],
  tealSmall: [[4, 1], [5, 0.78]],
  greenS: [[2, 1], [3, 0.98], [4, 0.94], [5, 0.86], [6, 0.42]],
  greenM: [[3, 1], [4, 0.95], [5, 0.88], [6, 0.72]],
  green: [[2, 1], [3, 0.98], [4, 0.95], [5, 0.89], [6, 0.74]],
  greenY: [[3, 1], [4, 0.96], [5, 0.9], [6, 0.76], [7, 0.18]],
  lime: [[3, 1], [4, 0.98], [5, 0.93], [6, 0.86], [7, 0.66, 0, -3]],
  limeY: [[3, 1], [4, 0.98], [5, 0.93], [6, 0.86], [7, 0.66, 0, -3], [8, 0.2, 0, -6]],
  greenW: [[4, 1], [5, 0.92], [6, 0.8], [7, 0.3]],
  greenWide: [[3, 1], [4, 0.95], [5, 0.84], [6, 0.55]],
  greenLime: [[4, 1], [5, 0.96], [6, 0.88], [7, 0.68]],
  tealW: [[3, 1], [4, 0.96], [5, 0.78]],
  orange: [[5, 1], [7, 0.96], [8, 0.9], [9, 0.82], [10, 0.62]],
  red: [[5, 1], [7, 0.96], [8, 0.9], [9, 0.86], [10, 0.8], [11, 0.6]],
};

const Footing = ({ x, y, w, h, p }: { x: number; y: number; w: number; h: number; p: string }) => (
  <g>
    {P[p].map(([lv, s, dx = 0, dy = 0], i) => {
      const rw = w * s, rh = Math.min(h * s, h - 2 * Math.abs(dy));
      const r = i === 0 ? 0 : Math.min(0.5, 0.1 + (1 - s) * 1.3);
      return <rect key={i} x={x - rw / 2 + dx} y={y - rh / 2 + dy} width={rw} height={rh} rx={rw * r} ry={rh * r} fill={palette[lv]} />;
    })}
  </g>
);

type F = [number, number, number, number, string];
const col: Record<number, number> = { 1: 497, 2: 550, 3: 603, 4: 656, 5: 709, 6: 764, 7: 820, 8: 873, 9: 926, 10: 979, 12: 1090, 13: 1143, 14: 1196, 15: 1249, 16: 1302, 17: 1357, 18: 1413, 19: 1466, 20: 1519, 21: 1572, 22: 1625, 23: 1678, 24: 1731 };
const row = (y: number, w: number, h: number, spec: Record<string, string>): F[] =>
  Object.entries(spec).flatMap(([p, list]) => list.split(" ").map((c): F => [col[+c], y, w, h, p]));

const footings: F[] = [
  ...[1357, 1386, 1439, 1492, 1545, 1598].map((x): F => [x, 321, 17, 17, "solid"]),
  ...[1413, 1466, 1519, 1572, 1625, 1652].map((x): F => [x, 321, 17, 17, "tinyTop"]),
  [1678, 321, 17, 17, "tinyTop"], [1705, 321, 17, 17, "tinyCyan"],
  [1359, 347, 17, 16, "solid"], [1359, 374, 17, 17, "tinyTop"],
  ...row(347, 24, 24, { lowDot: "18 22", mid: "19 20 21" }), [1678, 347, 29, 28, "greenM"],
  [1705, 366, 18, 36, "green"],
  [953, 400, 17, 17, "tiny"], [1116, 400, 17, 17, "tiny"], [1170, 400, 17, 17, "tinyDark"], [1223, 400, 17, 17, "tinyDark"], [1275, 400, 17, 17, "tiny"],
  ...row(400, 24, 24, { mid: "9 13 14 15", greenS: "18 20 21 22", low: "19" }),
  [1357, 400, 27, 27, "cyanDot"], [1678, 400, 29, 29, "cyan"], [1731, 400, 27, 28, "cyanDot"],
  [987, 427, 36, 18, "greenWide"], [1082, 427, 35, 18, "greenWide"], [1310, 427, 36, 18, "tealW"],
  ...row(453, 28, 28, { blueDot: "13 14 15", blue: "9", teal: "10 12 16" }), [1357, 453, 30, 30, "pad"],
  ...row(453, 24, 24, { low: "18 19 20", greenS: "21 22" }), [1678, 453, 29, 27, "green"],
  ...row(506, 24, 23, { greenS: "22", low: "9 10 12 13 14 15 16 18 19 20 21" }), [1678, 506, 29, 29, "greenY"],
  ...row(559, 24, 23, { red: "1", low: "3 4 5 7 10 12 13 14 15 16 18 19 20 21 22", lowDot: "2", orange: "8 9" }), [1678, 559, 29, 29, "greenY"],
  ...row(612, 24, 23, { red: "1", greenM: "2", low: "3 4 5 10 12 13 14 15 16 18 19 20 21 22", orange: "8 9", greenS: "7" }), [1678, 612, 29, 29, "green"],
  ...row(665, 24, 23, { red: "1", greenM: "2", low: "3 4 5 10 12 13 14 15 16 18 19 20 21 22", orange: "8", greenS: "7 9" }), [1678, 665, 29, 29, "cyan"],
  ...[506, 559, 612, 665].map((y): F => [1357, y, 29, 29, "blue"]),
  ...[559, 612, 665].map((y): F => [764, y, 29, 28, "cyan"]),
  ...[453, 506, 559, 612].map((y): F => [1731, y, 27, 27, "cyan"]), [1731, 665, 27, 27, "cyanDot"],
  ...[426, 479, 532, 586, 639].map((y): F => [1731, y, 17, 16, "tinyBlue"]),
  ...[559, 586, 612, 639, 665, 692].map((y): F => [443, y, 17, 17, "tiny"]),
  ...row(719, 28, 28, { cyan: "3 4 7 8 9 13 14 15 18 19 20 22", cyanDot: "1", tealLow: "2 5 10 12 16 21", teal: "23" }),
  [443, 719, 28, 28, "cyanDot"], [764, 719, 33, 32, "tealBig"], [1357, 719, 33, 32, "tealBig"],
  [1705, 711, 18, 36, "green"],
  [444, 745, 20, 19, "tinyCyan"], [1731, 745, 17, 17, "tinyCyan"],
  ...[542, 716, 987, 1082, 1310, 1580].map((x): F => [x, 745, 36, 18, x === 542 || x === 1580 ? "greenW" : "greenLime"]),
  [443, 771, 28, 27, "cyanDot"], [470, 771, 17, 17, "tinyCyan"], [497, 771, 28, 27, "tealPad"],
  ...row(774, 30, 40, { green: "3 4 7 8 9 13 14 15 18 19 20" }),
  ...[576, 629, 682, 794, 847, 900, 953, 1116, 1169, 1223, 1275, 1386, 1439, 1492, 1545].map((x): F => [x, 771, 17, 17, "tealSmall"]),
  [520, 771, 16, 17, "tealSmall"], [737, 771, 16, 17, "tealSmall"], [1007, 771, 16, 17, "tealSmall"], [1062, 771, 16, 17, "tealSmall"], [1330, 771, 16, 17, "tealSmall"], [1600, 771, 16, 17, "tealSmall"],
  [545, 775, 34, 37, "lime"], [714, 775, 34, 37, "limeY"], [764, 775, 34, 40, "lime"], [984, 775, 34, 37, "limeY"],
  [1085, 775, 34, 37, "limeY"], [1307, 775, 33, 37, "limeY"], [1357, 775, 36, 37, "lime"], [1577, 775, 33, 37, "lime"],
  [1625, 771, 27, 27, "tealPad"], [1652, 771, 17, 17, "tinyBlue"], [1678, 771, 27, 27, "cyanDot"], [1705, 771, 18, 21, "tinyCyan"], [1731, 771, 27, 27, "cyan"],
  ...row(848, 32, 32, { padTeal: "1 2", pad: "3 4 7 8 9 13 14 15 18 19 20 21" }),
  ...[709, 979, 1090, 1302].map((x): F => [x, 857, 32, 50, "tall"]), [764, 857, 32, 46, "tallB"], [1357, 857, 32, 46, "tallB"],
  [1034, 866, 32, 28, "pad"],
  ...row(918, 28, 28, { base: "2 7 8 9 10 13 14 15 16 18 19 20 21", baseCyan: "1 3 4 5 12" }),
  ...[764, 1034, 1357].map((x): F => [x, 918, 32, 28, "baseCyan"]),
];

const marks: [string, number, number][] = [
  ["47", 1686, 230], ["3", 955, 274], ["4", 1243, 274], ["9", 1349, 324], ["8", 1504, 324], ["7", 1752, 319],
  ["12", 1044, 363], ["13", 903, 393], ["11", 1154, 389], ["10", 1243, 389], ["18", 428, 593], ["19", 698, 593], ["20", 902, 593],
  ["21", 1044, 593], ["22", 1132, 593], ["23", 1238, 593], ["24", 1345, 593], ["25", 1504, 593], ["26", 1748, 593],
  ["17", 291, 643], ["38", 428, 801], ["37", 694, 805], ["36", 911, 805], ["35", 1039, 805], ["34", 1154, 805],
  ["33", 1234, 805], ["32", 1349, 805], ["31", 1504, 810], ["30", 1748, 792], ["39", 278, 890], ["40", 517, 1009],
  ["41", 845, 1006], ["42", 1088, 1006], ["43", 1234, 1006], ["44", 1504, 1006], ["45", 1774, 961],
];

const teeth = [439, 492, 545, 598, 651].map((y) => `V${y}h5v29h-5`).join("");

const Mosaic = () => (
  <svg width="100%" height="100%" role="img" aria-label="Settlement mosaic plot">
    <g transform="translate(-35 -189)">
      <g shapeRendering="crispEdges">
        {footings.map(([x, y, w, h, p], i) => <Footing key={i} x={x} y={y} w={w} h={h} p={p} />)}

        {/* warm zones running from the heavy footings into their neighbours */}
        {[[727, 745], [997, 1015], [1320, 1338], [1590, 1608]].map(([a, b]) => (
          <path key={a} d={`M${a} 764L${b - 8} 766L${b - 4} 771L${b - 8} 776L${a} 779Z`} fill={palette[a === 1590 ? 6 : 7]} />
        ))}
        <path d="M531 764L522 767L518 771L522 776L531 778Z" fill={palette[6]} />
        <path d="M1073 764L1065 767L1061 771L1065 776L1073 778Z" fill={palette[7]} />

        {/* strip footings beside the central wall */}
        {[[967, 991, 1014], [1291, 1314, 1337]].map(([a, b, c]) => (
          <g key={a}>
            <path d={`M${a} 388H${b}V392H${c}V409H${b}V412H${a}Z`} fill={palette[3]} />
            <path d={`M${a + 1} 396Q${a + 6} 388 ${b} 392H${c - 1}V408H${b}L${a + 1} 411Z`} fill={palette[4]} />
            <path d={`M${a + 4} 404Q${a + 2} 392 ${a + 16} 393L${c - 6} 397Q${c - 1} 403 ${c - 8} 407H${b}Q${a + 8} 414 ${a + 4} 404Z`} fill={palette[5]} />
          </g>
        ))}
        <path d="M1055 392H1078V388H1102V412H1078V409H1055Z" fill={palette[3]} />
        <path d="M1056 393H1078L1092 389L1101 396V411H1078L1056 407Z" fill={palette[4]} />
        <path d="M1058 400Q1060 393 1080 396Q1097 391 1098 402Q1096 412 1086 410L1066 406Z" fill={palette[5]} />

        {/* central wall footing */}
        <path d={`M1020 386H1049V415h-5${teeth}V702h7v33h-7V757h5V787H1020Z`} fill={palette[3]} />
        <path d={`M1021 392Q1034 384 1048 392V414h-4${teeth}V704h6v30h-6V757h4V785H1021Z`} fill={palette[4]} />
        <path d="M1022 402Q1034 388 1047 402V414H1044V439L1048 450L1044 480L1046 505L1043 540L1046 560L1043 600L1046 615L1042 645L1046 665L1044 700L1050 712V730L1044 740L1048 765Q1046 781 1034 781Q1022 780 1022 770V700V480L1022 450Z" fill={palette[5]} />
        <path d="M1024 404Q1034 390 1045 404L1044 440L1047 455L1042 490L1043 510L1038 540L1042 560L1039 600L1042 615L1038 645L1043 665L1044 700L1048 715V735L1044 745L1047 765Q1044 776 1034 776Q1022 774 1023 765L1022 700L1026 650L1028 600L1028 540L1026 480L1023 450Z" fill={palette[6]} />
        <path d="M1029 408Q1034 400 1038 408L1043 440L1042 450L1036 464Q1032 468 1029 458L1024 442L1027 412Z" fill={palette[7]} />
        <path d="M1031 692Q1034 684 1036 695L1042 708L1047 720L1044 745L1043 770Q1034 776 1024 769L1023 735Z" fill={palette[7]} />
        <path d="M1033 718Q1035 710 1038 716L1041 725L1039 750L1038 765Q1034 769 1029 763L1026 745Z" fill={palette[8]} />

        {/* north-east corner */}
        <path d="M1718 307H1745V364H1740V383H1723V364H1718Z" fill={palette[2]} />
        <path d="M1719 311Q1731 303 1744 313V362H1739V382H1723V363H1719Z" fill={palette[3]} />
        <path d="M1719 318Q1731 303 1742 318L1744 350L1739 366V382H1723V363H1719Z" fill={palette[4]} />
        <path d="M1720 325Q1731 308 1739 325L1742 348L1737 378Q1731 384 1725 376L1719 360Z" fill={palette[5]} />
        <path d="M1721 330Q1729 318 1737 330L1740 348L1735 366Q1729 378 1725 366L1719 350Z" fill={palette[6]} />
        <path d="M1725 348q2-6 5 0v6q-2 4-5 0z" fill={palette[7]} />
        {/* south-east corner */}
        <path d="M1723 684H1740V699H1745V733H1718V699H1723Z" fill={palette[3]} />
        <path d="M1724 690Q1731 680 1739 690V700L1743 705V730H1719V702Z" fill={palette[4]} />
        <path d="M1726 694Q1731 684 1735 697L1740 712L1734 730H1720L1719 705Z" fill={palette[5]} />
        <path d="M1721 704Q1729 692 1735 705L1736 716Q1728 730 1720 720Z" fill={palette[6]} />
        <path d="M1682 716q4-6 6-4v11l-4-1z" fill={palette[6]} />

        {/* local anomalies under single footings */}
        {[559, 665].map((y) => (
          <g key={y}>
            <path d={`M501 ${y - 11}H509V${y + 11}H501Z`} fill={palette[5]} />
            <path d={`M501 ${y - 10}l5 3v14l-5 3z`} fill={palette[6]} />
            <path d={`M499 ${y - 8}l3 3v11l-3 3z`} fill={palette[8]} />
          </g>
        ))}
        <path d="M819 552l5-3 4 1v19l-8-3-4-3 4-4z" fill={palette[5]} />
        <path d="M822 556l4-4 1 4-1 9-5-1z" fill={palette[6]} />
        <path d="M811 621L829 603V622H812Z" fill={palette[8]} />
        <path d="M812 620L827 606L826 618L820 622Z" fill={palette[10]} />
        <path d="M771 664l2-11 4 6v15l-5 2z" fill={palette[5]} /><path d="M772 665l1-7 2 8-2 8z" fill={palette[6]} />
        <path d="M818 706h10l5 5v7l-6-2z" fill={palette[6]} /><path d="M860 716l1-8 21-1-6 6-11 5z" fill={palette[6]} />
        <path d="M555 601h6v6z" fill={palette[1]} />
        <path d="M915 497L926 506L938 512L936 517H915Z" fill={palette[4]} /><path d="M917 500l9 9 9 1-2 6h-10z" fill={palette[6]} />
        <rect x="1401" y="388" width="24" height="10" fill={palette[7]} />
        <rect x="1402" y="389" width="22" height="8" rx="3" fill={palette[9]} /><rect x="1406" y="393" width="14" height="3" fill={palette[10]} />
        <path d="M1402 443h4l1 8-1 8h-3z" fill={palette[4]} />
        <path d="M1456 390l5 3 12 1 2 3-6 3-9-4z" fill={palette[4]} />
        <path d="M1632 549l4 2v5l-3-2z" fill={palette[4]} />
        <rect x="1665" y="599" width="4" height="27" fill={palette[3]} />

        {/* cursor */}
        <path d="M36.5 849v31M35 859.500h6.500v10H35M42 864.500h10" stroke="#0000ff" fill="none" />
        {/* origin axes */}
        <path d="M443.500 780V752M438 759l5-8 5 8" stroke="#00c000" fill="none" />
        <path d="M443 780.500h29M465 775l8 5-8 5" stroke="#ff0000" fill="none" />
        {[[432, 934], [1746, 935], [1746, 309]].map(([x, y]) => <path key={x + y} d={`M${x - 2} ${y}.500h4M${x}.500 ${y - 2}v4`} stroke="#bbb" />)}
      </g>
      <g fontFamily="Liberation Serif" fontStyle="italic" fontSize="15">
        <text x="441" y="742" fill="#00b000">y</text><text x="480" y="781" fill="#f00">x</text>
      </g>
      {marks.map(([t, x, y]) => (
        <g key={t}>
          <rect x={x + 2} y={y - 15} width={t.length * 7} height="11" fill="#fff" />
          <rect x={x - 3} y={y - 3} width="6" height="6" fill="#00b400" stroke="#111" shapeRendering="crispEdges" />
          <text x={x + 1} y={y - 5} fontSize="11" fontWeight="700" fontFamily="DejaVu Sans Condensed, DejaVu Sans, sans-serif" fill="#008000">{t}</text>
        </g>
      ))}
    </g>
  </svg>
);

/* ---------- status bar ---------- */

const Status = styled.footer`flex: none; display: flex; height: 23px; color: #fff; background: linear-gradient(#444a57, #3b3f48 8px, #2e2e2e 9px);`;
const StatusText = styled.div`flex: 1; padding: 4px 2px; font-size: 11px;`;
const StatusRight = styled.div`display: flex; align-items: center; width: 438px; padding-left: 6px; border-left: 2px solid #111; color: #111; background: linear-gradient(#bdbdbd, #a3a5a6 8px, #8f9294 9px, #808894);`;
const StatusButton = styled.button`width: 24px; height: 20px; display: grid; place-items: center; background: #cdd6da; border: 1px solid #a5adb2;`;
const StatusSelect = styled.select`
  appearance: none; width: 54px; height: 19px; border: 0; border-radius: 0; margin-right: 4px;
  background: conic-gradient(from 315deg at 50% 100%, #777 90deg, #eee 0) right 4px center / 6px 3px no-repeat, #eee;
  background: linear-gradient(#777, #777) right 6px center / 3px 2px no-repeat, linear-gradient(#777, #777) right 4px top 8px / 7px 1px no-repeat, #eee;
`;
const Coord = styled.div`flex: 0 1 134px; height: 19px; padding-left: 4px; line-height: 19px; border-left: 2px solid #444; font-size: 11px;`;

const tabs: [string, number][] = [["Create and edit", 112], ["Advanced edit options", 144], ["Analysis", 76], ["Results", 60], ["Advanced results", 124], ["RC", 36], ["Steel", 58], ["Masonry", 72]];

export default function App() {
  return (
    <Page>
      <GlobalStyle />
      <TitleBar>
        <Orb aria-label="Application menu">
          <svg width="30" height="28" viewBox="0 0 30 28" aria-hidden="true">
            <path d="M5 9q-4 0-3-4 3-4 7 0l2 5 1 13M10 4q10-3 16 1 3 5-2 6M13 6l2 18M17 6l1 18M21 7l-1 16M9 11q9 4 15-1" fill="none" stroke="#3e7f9e" strokeWidth="4" />
            <path d="M5 9q-4 0-3-4 3-4 7 0l2 5 1 13M10 4q10-3 16 1 3 5-2 6M13 6l2 18M17 6l1 18M21 7l-1 16M9 11q9 4 15-1" fill="none" stroke="#a6d3e6" strokeWidth="2" />
          </svg>
        </Orb>
        <Quick>
          <QuickButton aria-label="New"><Icon name="newFile" /></QuickButton><Caret $c="#ddd" />
          <QuickButton aria-label="Open"><Icon name="open" /></QuickButton>
          <QuickButton aria-label="Save"><Icon name="save" /></QuickButton>
          <QuickButton aria-label="Undo"><Icon name="undo" /></QuickButton><Caret $c="#ddd" />
          <QuickButton aria-label="Redo"><Icon name="redo" /></QuickButton><Caret $c="#ddd" />
          <QuickButton $dim aria-label="Pages"><Icon name="pages" /></QuickButton>
          <QuickButton aria-label="Book"><Icon name="book" /></QuickButton>
          <QuickButton aria-label="Snapshot"><Icon name="camera" /></QuickButton>
          <QuickButton aria-label="Run"><Icon name="bolt" /></QuickButton><Caret $c="#ddd" />
          <QuickButton $dim aria-label="Beam"><Icon name="beamIcon" /></QuickButton>
          <QuickMore aria-label="Customize toolbar"><svg width="7" height="8"><path d="M1 1h5" stroke="#ddd" /><path d="M0 4h7l-3.500 4z" fill="#ddd" /></svg></QuickMore>
        </Quick>
        <AppTitle>LIRA-SAPR&nbsp; 2021 R1 x64</AppTitle>
        <WinButtons>
          <button aria-label="Minimize"><svg width="14" height="12" viewBox="0 0 14 12"><path d="M2 6.500h10" stroke="#fff" /></svg></button>
          <button aria-label="Restore"><svg width="14" height="12" viewBox="0 0 14 12"><path d="M2.500 3.500h7v7h-7zM4.500 3v-2h7v7h-2" stroke="#fff" fill="none" /></svg></button>
          <button aria-label="Close"><svg width="14" height="12" viewBox="0 0 14 12"><path d="M2 1l10 10M12 1L2 11" stroke="#fff" /></svg></button>
        </WinButtons>
      </TitleBar>

      <TabBar>
        {tabs.map(([t, w]) => <TabButton key={t} $w={w}>{t}</TabButton>)}
        <TabButton $w={42} $on>Soil</TabButton>
        <TabTools>
          <TextButton>Style <Caret $c="#eee" /></TextButton>
          <TextButton>Window <Caret $c="#eee" /></TextButton>
          <button aria-label="Help"><Icon name="help" /></button><Caret $c="#eee" />
          <button aria-label="Minimize document"><svg width="10" height="10"><path d="M1 8h7" stroke="#a9b0bb" strokeWidth="2" /></svg></button>
          <button aria-label="Restore document"><svg width="10" height="10"><path d="M1 4h6v4H1zM3 2h6v4" stroke="#a9b0bb" fill="none" /></svg></button>
          <button aria-label="Close document"><svg width="10" height="10"><path d="M1 1l7 8M8 1L1 9" stroke="#a9b0bb" strokeWidth="2" /></svg></button>
        </TabTools>
      </TabBar>

      <Ribbon>
        <Group $w={236}>
          <GroupBody>
            <Big icon="soil" a="Soil" b="properties" w={55} />
            <Big icon="borehole" a="Boreholes" caret w={56} />
            <Big icon="import" a="Imported" b="loads" w={52} />
            <SmallGrid $cols={1} $w={63}>
              <RowBtn><Icon name="loads" />Loads<Caret /></RowBtn>
              <RowBtn><Icon name="grid" />Grids<Caret /></RowBtn>
              <RowBtn $dim><Icon name="solids" />Solids</RowBtn>
            </SmallGrid>
          </GroupBody>
          <GroupName>Model</GroupName>
        </Group>
        <Group $w={102}>
          <GroupBody><Big icon="view3d" a="3D" b="view" w={40} /><Cells cols={2} names={["flag", "contour", "pile", "contourFill", "layers", "faded"]} /></GroupBody>
          <GroupName>View</GroupName>
        </Group>
        <Group $w={194}>
          <GroupBody><Big icon="extrap" a="Extrapolation" w={70} /><Big icon="params" a="Analysis" b="parameters" w={64} /><Cells cols={2} names={["k1", "kD", "k2", "arrows", "k3", ""]} /></GroupBody>
          <GroupName>Analysis</GroupName>
        </Group>
        <Group $w={190}>
          <GroupBody>
            <Big icon="settle" a="Settlement" caret w={58} on />
            <Big icon="outPoint" a="Output" b="at Point" w={45} />
            <SmallGrid $cols={3} $w={26}>
              <SmallBtn $dim><MathText>C<sub>0</sub></MathText></SmallBtn>
              <SmallBtn><MathText>H<sub>c</sub></MathText></SmallBtn>
              <SmallBtn><MathText>S<sub>z</sub></MathText></SmallBtn>
              <SmallBtn><MathText>C<sub>1</sub></MathText></SmallBtn>
              <SmallBtn><MathText $over>E</MathText></SmallBtn>
              <SmallBtn><MathText>R</MathText></SmallBtn>
              <SmallBtn><MathText>C<sub>2</sub></MathText></SmallBtn>
              <SmallBtn><MathText $over>V</MathText></SmallBtn>
              <SmallBtn><Ratio>Sz/<sub>R</sub></Ratio></SmallBtn>
            </SmallGrid>
          </GroupBody>
          <GroupName>Output data</GroupName>
        </Group>
        <Group $w={65}>
          <GroupBody><Big icon="doc" a="Documen-" b="tation" caret w={55} /></GroupBody>
          <GroupName>Tables</GroupName>
        </Group>
        <Group $w={60}>
          <GroupBody><Cells cols={2} w={25} names={["sel1", "sel2", "sel3", "sel4", "sel5", "brush"]} on={["sel3"]} /></GroupBody>
          <GroupName>Select</GroupName>
        </Group>
        <Group $w={44}>
          <GroupBody><Cells cols={1} w={22} names={["ucs1", "ucs2", "ucs3"]} /><CaretCol><span /><span /><Caret /></CaretCol></GroupBody>
          <GroupName>UCS</GroupName>
        </Group>
        <Group $w={137}>
          <GroupBody><Cells cols={5} w={26} names={["sq", "plate", "grid", "axes", "zoomW", "sq3", "plate5", "tiles", "water", "zoomP", "sqPlus", "plate0", "house", "nodes"]} on={["sq", "plate", "grid", "axes", "sq3", "water"]} /></GroupBody>
          <GroupName>Show</GroupName>
        </Group>
        <Group $w={42}>
          <GroupBody><Cells cols={1} w={22} names={["scale", "target", "globe"]} /><CaretCol><Caret /><Caret /><span /></CaretCol></GroupBody>
          <GroupName>Tools</GroupName>
        </Group>
      </Ribbon>

      <Workspace>
        <RailBox $w={26}>
          <RailTools items={["lensDot", ">", "frame", "lensH", ">", "lensV", "lensE", "lensC", "lensG", ">", "lensEF", ">", "lensP", ">", "funnel", "frameUndo", "-", "rot", "mesh", "-", "lensX", "-", "torch", "lIcon", ">", "notes"]} />
        </RailBox>

        <Centre>
          <Doc>
            <Legend>
              <Bar>{palette.map((c) => <Swatch key={c} $c={c} />)}</Bar>
              <Ticks>{bounds.map((b) => <Tick key={b}>{b}</Tick>)}</Ticks>
            </Legend>
            <View>
              <ViewTop>
                <Canvas><Mosaic /><SoilDialog /></Canvas>
                <VScroll>
                  <ScrollArrow $len={17} $v aria-label="Scroll up"><Chevron turn={0} /></ScrollArrow>
                  <Space $grow={33} /><Thumb $grow={763} /><Space $grow={16} />
                  <ScrollArrow $len={17} $v aria-label="Scroll down"><Chevron turn={180} /></ScrollArrow>
                </VScroll>
              </ViewTop>
              <HScroll>
                <ScrollArrow $len={17} aria-label="Scroll left"><Chevron turn={270} /></ScrollArrow>
                <Space $grow={296} /><Thumb $grow={986} /><Space $grow={517} />
                <ScrollArrow $len={17} aria-label="Scroll right"><Chevron turn={90} /></ScrollArrow>
              </HScroll>
            </View>
            <Sheets>
              <Sheet $w={32}>Plan</Sheet><Sheet $w={59}>Upper soil</Sheet><Sheet $w={28}>Cut</Sheet><Sheet $w={64} $on>Settlement</Sheet>
              <Sheet $w={32}><SheetMath>C<sub>1</sub></SheetMath></Sheet>
              <Sheet $w={34}><SheetMath>C<sub>2</sub></SheetMath></Sheet>
              <Sheet $w={34}><SheetMath>H<sub>c</sub></SheetMath></Sheet>
              <Sheet $w={33}><SheetMath $over>E</SheetMath></Sheet>
              <Sheet $w={34}><SheetMath $over>V</SheetMath></Sheet>
              <Sheet $w={24}>Sz</Sheet><Sheet $w={20}>R</Sheet><Sheet $w={35}>Sz/R</Sheet>
            </Sheets>
          </Doc>
          <DockTitle>
            <span>Move and rotate coordinate system</span>
            <button aria-label="Close panel"><svg width="9" height="9"><path d="M1 1l7 7M8 1L1 8" stroke="#444" strokeWidth="1.400" /></svg></button>
          </DockTitle>
          <DockBody>
            <DockPanel>
              <Field><Icon name="moveX" /><FieldInput aria-label="Shift along X" /></Field>
              <Field><Icon name="moveY" /><FieldInput aria-label="Shift along Y" /></Field>
              <Field><Icon name="turn" /><FieldInput aria-label="Rotation angle" /><Degree>°</Degree></Field>
            </DockPanel>
          </DockBody>
        </Centre>

        <RailBox $w={26}>
          <RailTools on="iso2" items={["iso", "iso2", "xz", ">", "xy", ">", "yz", ">", "floor", "rotZ", ">", "xyz"]} />
          <RailTools on="cube" items={["cube", "cubeT", "cubeB", "cubeL", "cubeS", "cubeR", "cubeF", "cubeD", "cubeI"]} />
        </RailBox>
      </Workspace>

      <Status>
        <StatusText>Daylight ground surface has default elevation of +100.0 m</StatusText>
        <StatusRight>
          <StatusButton aria-label="Coordinate mode"><Icon name="zStat" /></StatusButton>
          <StatusSelect aria-label="Level"><option></option></StatusSelect>
          <Coord>X=-92.00</Coord><Coord>Y=-18.92</Coord><Coord>Z=</Coord>
        </StatusRight>
      </Status>
    </Page>
  );
}
